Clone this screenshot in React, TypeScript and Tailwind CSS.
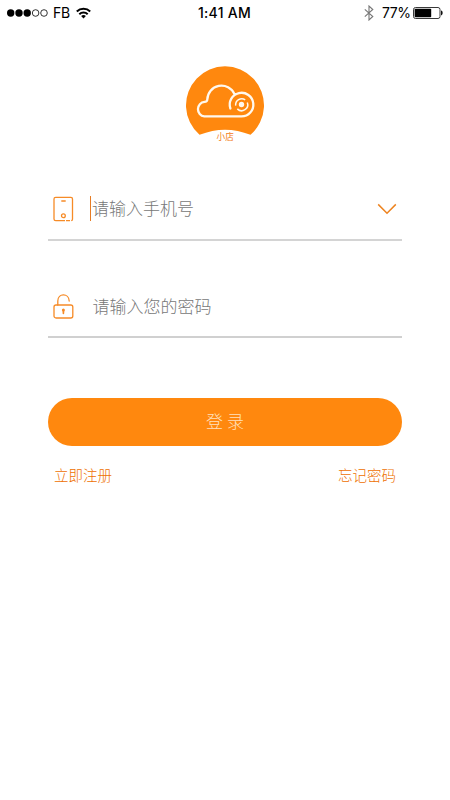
import React from "react";

function StatusBar() {
  return (
    <header className="flex h-[26px] items-center text-black">
      <div className="flex w-[150px] items-center pl-[7px]">
        <svg width="42" height="10" viewBox="0 0 42 10" fill="currentColor">
          <circle cx="3.7" cy="5" r="3.7" />
          <circle cx="12" cy="5" r="3.7" />
          <circle cx="20.2" cy="5" r="3.7" />
          <circle cx="28.6" cy="5" r="3.3" fill="none" stroke="currentColor" strokeWidth=".8" />
          <circle cx="37" cy="5" r="3.3" fill="none" stroke="currentColor" strokeWidth=".8" />
        </svg>
        <span className="ml-[4px] w-[17px] text-[14px] leading-none tracking-[-0.2px]">FB</span>
        <svg className="ml-[6px]" width="15" height="12" viewBox="0 0 15 12" fill="none" stroke="currentColor" strokeWidth="2">
          <path d="M.8 4.5a9.5 9.5 0 0 1 13.4 0" />
          <path d="M3.3 7.2a6 6 0 0 1 8.4 0" />
          <path d="M7.5 11.6 5.1 9.1a3.4 3.4 0 0 1 4.8 0Z" fill="currentColor" stroke="none" />
        </svg>
      </div>
      <div className="flex-1 whitespace-nowrap pr-[1px] text-center text-[14px] font-medium leading-none tracking-[0.3px]">1:41 AM</div>
      <div className="flex w-[150px] items-center justify-end pr-[6px]">
        <svg width="10" height="16" viewBox="0 0 10 16" fill="none" stroke="#777" strokeWidth="1.1">
          <path d="M.8 4.3 8.8 11.5 5 15V1l3.800 3.500L.8 11.700" />
        </svg>
        <span className="ml-[8px] w-[28px] whitespace-nowrap text-[14px] leading-none tracking-[-0.4px]">77%</span>
        <svg className="ml-[3px]" width="31" height="12" viewBox="0 0 31 12">
          <rect x=".5" y=".5" width="26.5" height="11" rx="2" fill="none" stroke="#222" strokeWidth=".9" />
          <rect x="1.6" y="1.7" width="16.6" height="8.6" rx=".8" fill="#000" />
          <path d="M28 3.600c2.200.3 2.200 4.500 0 4.800Z" fill="#111" />
        </svg>
      </div>
    </header>
  );
}

function Logo() {
  return (
    <svg className="mx-auto mt-[40px] block" width="78" height="78" viewBox="0 0 78 78">
      <path d="M13.500 68.800A39 39 0 1 1 64.500 68.800Q39 58.500 13.500 68.800Z" fill="#ff880e" />
      <g fill="none" stroke="#fff8ee" strokeLinecap="round">
        <path
          d="M44.400 42.500A11.800 11.800 0 1 1 55.500 50.400H18.300A7.300 7.300 0 0 1 18.500 35.900Q21.200 35.700 21.300 33.500A14.200 14.200 0 0 1 48.500 28.100"
          strokeWidth="2.300"
        />
        <path d="M59.200 33.900A6.100 6.100 0 0 0 49.700 39.700M51.300 42.900A6.100 6.100 0 0 0 61.300 36.400" strokeWidth="1.500" strokeLinecap="butt" />
      </g>
      <circle cx="55.500" cy="38.500" r="2.700" fill="#fff8ee" />
      <text x="39.200" y="74.300" textAnchor="middle" fontSize="8.600" fontWeight="400" fill="#f27b16">小店</text>
    </svg>
  );
}

function PhoneIcon() {
  return (
    <svg width="21" height="26" viewBox="0 0 21 26" fill="none" stroke="#f68b27" strokeWidth="1.300" strokeLinecap="butt">
      <path d="M13 24.700h4M18.200 24.600c.9-.1 1.300-.6 1.300-1.400V3.100c0-1.100-.5-1.700-1.600-1.700H2.700C1.600 1.400 1 2 1 3.100v20c0 1 .6 1.600 1.700 1.600h9.300M8.300 5h4.400" />
      <circle cx="10.400" cy="19.700" r="1.900" />
    </svg>
  );
}

function LockIcon() {
  return (
    <svg width="21" height="26" viewBox="0 0 21 26" fill="none" stroke="#f68b27" strokeWidth="1.300" strokeLinecap="round">
      <path d="M4.800 11V7C4.800-1 15.900-1.200 16.200 7" />
      <rect x="1" y="11" width="18.800" height="13" rx="2" />
      <circle cx="10.400" cy="16" r="1.500" fill="#f68b27" stroke="none" />
      <path d="M10.400 17v2.300" strokeWidth="1.700" />
    </svg>
  );
}

export default function App() {
  return (
    <main className="h-[800px] w-[450px] overflow-hidden bg-white font-['Inter','Noto_Sans_CJK_SC',sans-serif]">
      <StatusBar />
      <Logo />
      <form className="mx-[48px] mt-[34px]">
        <div className="flex h-[63px] items-center border-b-2 border-[#d4d4d4] pl-[5px]">
          <PhoneIcon />
          <span className="ml-[16px] h-[25px] w-px bg-[#e67c24]" />
          <span className="ml-[1px] flex-1 text-[17px] font-light leading-[24px] text-[#777]">请输入手机号</span>
          <svg className="mr-[5px]" width="20" height="12" viewBox="0 0 20 12" fill="none" stroke="#ed8421" strokeWidth="1.500">
            <path d="m1.200 1.400 8.800 8.800 8.800-8.800" />
          </svg>
        </div>
        <div className="mt-[34px] flex h-[63px] items-center border-b-2 border-[#d0d0d0] pl-[5px] pt-[2px]">
          <LockIcon />
          <span className="ml-[18.5px] text-[17px] font-light leading-[24px] text-[#777]">请输入您的密码</span>
        </div>
        <button type="button" className="mt-[60px] flex h-[48px] w-full items-center justify-center rounded-full bg-[#ff880e] text-[17px] font-light leading-none text-[#ffe0bd]">
          <span>登</span>
          <span className="ml-[4px]">录</span>
        </button>
        <nav className="mt-[20px] flex justify-between px-[6px] text-[14.5px] font-light leading-[20px] text-[#ee7000]">
          <a>立即注册</a>
          <a>忘记密码</a>
        </nav>
      </form>
    </main>
  );
}
